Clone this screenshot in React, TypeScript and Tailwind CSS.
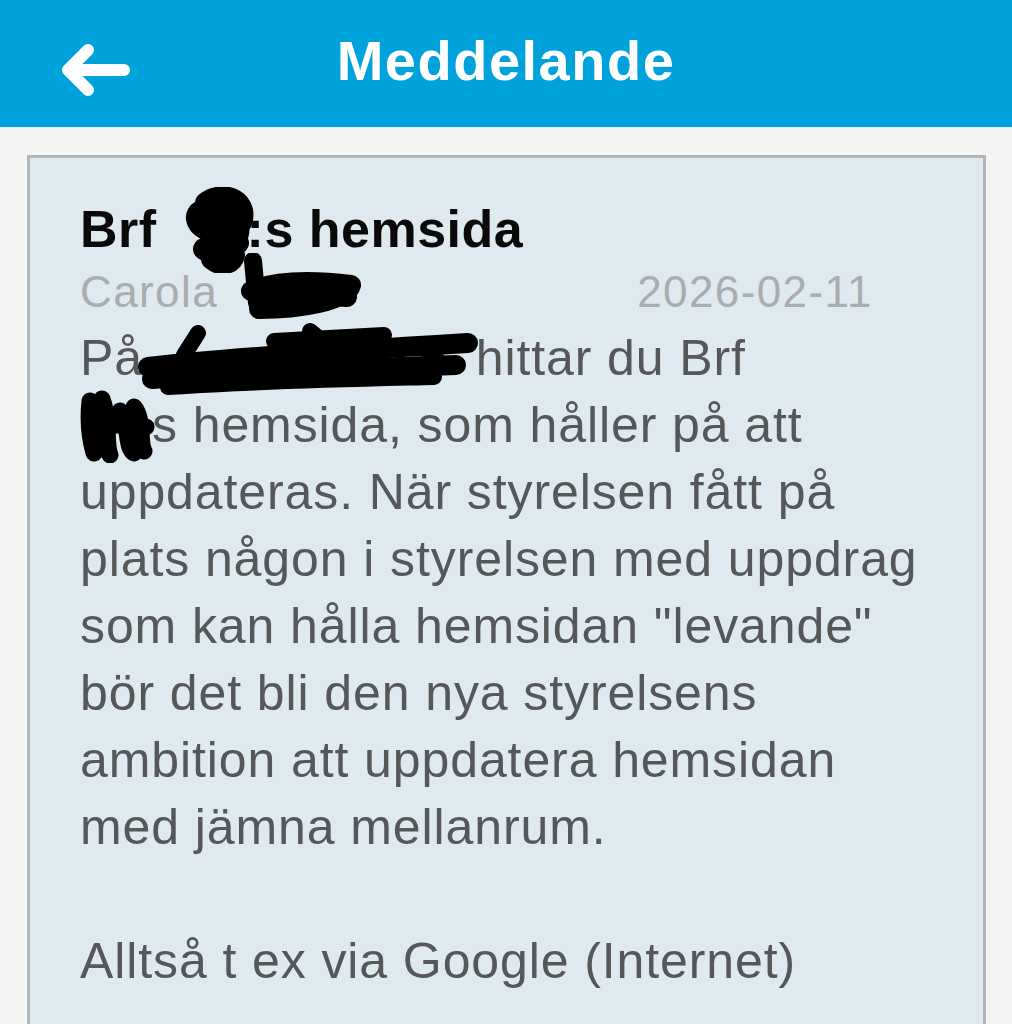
import type { ReactNode } from "react";

// Marker strokes that blank out personal details in the original screenshot.
function Scribble({ className, w, h, children }: { className: string; w: number; h: number; children: ReactNode }) {
  return (
    <svg
      className={className}
      width={w}
      height={h}
      viewBox={`0 0 ${w} ${h}`}
      fill="none"
      stroke="#000"
      strokeLinecap="round"
      strokeLinejoin="round"
      aria-hidden="true"
    >
      {children}
    </svg>
  );
}

const BODY_LINES = [
  "uppdateras. När styrelsen fått på",
  "plats någon i styrelsen med uppdrag",
  'som kan hålla hemsidan "levande"',
  "bör det bli den nya styrelsens",
  "ambition att uppdatera hemsidan",
  "med jämna mellanrum.",
];

export default function App() {
  return (
    <div className="min-h-screen bg-[#f4f4f4] font-['Liberation_Sans',Arial,sans-serif]">
      <header className="relative flex h-[127px] items-center justify-center bg-[#00a2db]">
        <button type="button" aria-label="Tillbaka" className="absolute left-[58px] top-[40px]">
          <svg width="76" height="60" viewBox="0 0 76 60" fill="none" aria-hidden="true">
            <path
              d="M10 30h56M30 10L10 30l20 20"
              stroke="#fff"
              strokeWidth="12"
              strokeLinecap="round"
              strokeLinejoin="round"
            />
          </svg>
        </button>
        <h1 className="-mt-[6px] text-[56px] font-bold tracking-[1.5px] text-white">Meddelande</h1>
      </header>

      <main className="mx-[26px] ml-[27px] mt-[28px] min-h-[900px] border-[3px] border-[#b2b6b9] bg-[#dfe9f0] pl-[50px] pr-[40px] pt-[40px] pb-[80px]">
        <h2 className="text-[52px] font-bold leading-[62px] tracking-[0.5px] text-[#0a0a0a]">
          Brf{" "}
          <span className="relative inline-block h-0 w-[75px]">
            <Scribble className="absolute left-[10px] top-[-60px]" w={76} h={86}>
              <path
                d="M24 16C40 4 64 12 60 32C56 52 18 48 15 32C12 18 50 16 56 38C60 58 34 70 22 62M26 44L56 56M30 72C40 80 50 76 52 68M30 26L52 24"
                strokeWidth="22"
              />
            </Scribble>
          </span>
          :s hemsida
        </h2>

        <div className="mt-[4px] flex justify-between pr-[70px] text-[44px] leading-[56px] tracking-[1.4px] text-[#a9adb0]">
          <span>
            Carola{" "}
            <span className="relative inline-block h-0 w-[130px]">
              <Scribble className="absolute left-[7px] top-[-54px]" w={125} h={68}>
                <path d="M14 8L18 50" strokeWidth="18" />
                <path d="M12 38C40 26 80 28 112 32C108 48 60 56 20 56M22 46C60 40 90 42 108 44" strokeWidth="20" />
              </Scribble>
            </span>
          </span>
          <span>2026-02-11</span>
        </div>

        <div className="mt-[5px] text-[50px] leading-[67px] tracking-[0.9px] text-[#555759]">
          <div>
            På{" "}
            <span className="relative inline-block h-0 w-[318px]">
              <Scribble className="absolute left-[-24px] top-[-56px]" w={345} h={80}>
                <path d="M14 48C80 40 200 32 334 24" strokeWidth="20" />
                <path d="M18 60C100 54 200 50 322 46" strokeWidth="20" />
                <path d="M34 68C120 62 220 60 300 58" strokeWidth="16" />
                <path d="M50 36L64 14M140 22L250 16M176 12L198 30M290 28L310 48" strokeWidth="16" />
              </Scribble>
            </span>
            hittar du Brf
          </div>
          <div>
            <span className="relative inline-block h-0 w-[72px]">
              <Scribble className="absolute left-[-2px] top-[-53px]" w={78} h={74}>
                <path
                  d="M12 12C10 30 12 50 16 64M24 10C32 30 27 55 32 66M42 22C52 35 47 58 56 64M56 18C66 30 61 54 66 62M12 40C30 30 50 40 68 38M14 24L60 30"
                  strokeWidth="17"
                />
              </Scribble>
            </span>
            s hemsida, som håller på att
          </div>
          {BODY_LINES.map((line) => (
            <div key={line}>{line}</div>
          ))}
          <div className="h-[67px]" />
          <div>Alltså t ex via Google (Internet)</div>
        </div>
      </main>
    </div>
  );
}
